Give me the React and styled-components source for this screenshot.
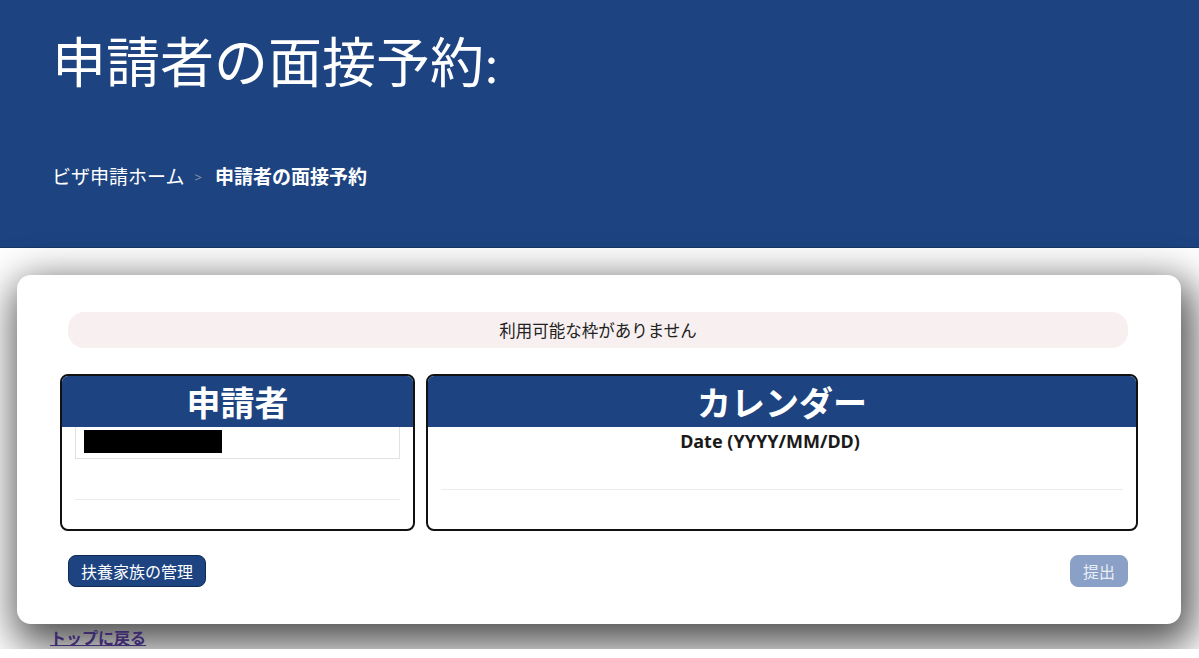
import styled, { createGlobalStyle } from 'styled-components';

const GlobalStyle = createGlobalStyle`
  html, body {
    margin: 0;
    padding: 0;
    background: #ffffff;
    font-family: "Noto Sans", "Noto Sans CJK JP", sans-serif;
  }
`;

function App() {
  return (
    <>
      <GlobalStyle />
      <Header>
        <Title>申請者の面接予約:</Title>
        <Crumbs>
          <span>ビザ申請ホーム</span>
          <Sep>&gt;</Sep>
          <strong>申請者の面接予約</strong>
        </Crumbs>
      </Header>
      <Main>
        <Card>
          <Alert>利用可能な枠がありません</Alert>
          <Panels>
            <Panel>
              <PanelHead>申請者</PanelHead>
              <PanelBody>
                <NameBox>
                  <Redacted />
                </NameBox>
                <Rule $top={40} />
              </PanelBody>
            </Panel>
            <Panel>
              <PanelHead>カレンダー</PanelHead>
              <PanelBody>
                <DateLabel>Date (YYYY/MM/DD)</DateLabel>
                <Rule $top={34} />
              </PanelBody>
            </Panel>
          </Panels>
          <Actions>
            <Button>扶養家族の管理</Button>
            <Button disabled>提出</Button>
          </Actions>
        </Card>
        <BackLink href="#">トップに戻る</BackLink>
      </Main>
    </>
  );
}

export default App;

const Header = styled.header`
  height: 248px;
  background: #1d4481;
  border-bottom: 1px solid #173766;
  padding: 28px 52px 0;
  box-sizing: border-box;
  color: #fff;
`;

const Title = styled.h1`
  margin: 0;
  font-family: "Liberation Serif", "Noto Sans CJK JP", serif;
  font-weight: normal;
  font-size: 54px;
  line-height: 74px;
`;

const Crumbs = styled.div`
  margin-top: 62px;
  font-size: 19px;
  line-height: 26px;
  display: flex;
  align-items: center;
  strong {
    font-weight: bold;
  }
`;

const Sep = styled.span`
  color: #8c96a8;
  font-size: 13px;
  margin: 0 13px 0 10px;
`;

const Main = styled.main`
  padding: 27px 18px 0 17px;
`;

const Card = styled.section`
  background: #fff;
  border-radius: 14px;
  box-shadow: 5px 14px 40px 8px rgba(0, 0, 0, 0.68);
  padding: 37px 43px 37px;
`;

const Alert = styled.div`
  margin: 0 10px 0 8px;
  height: 36px;
  border-radius: 16px;
  background: #f8f0f0;
  color: #222;
  font-size: 16.5px;
  display: flex;
  align-items: center;
  justify-content: center;
`;

const Panels = styled.div`
  margin-top: 26px;
  display: grid;
  grid-template-columns: 355px 1fr;
  gap: 11px;
`;

const Panel = styled.div`
  border: 2px solid #111;
  border-radius: 8px;
  overflow: hidden;
  height: 157px;
  box-sizing: border-box;
  display: flex;
  flex-direction: column;
`;

const PanelHead = styled.div`
  background: #1d4481;
  color: #fff;
  font-weight: bold;
  font-size: 34px;
  height: 51px;
  display: flex;
  align-items: center;
  justify-content: center;
`;

const PanelBody = styled.div`
  padding: 0 13px;
`;

const NameBox = styled.div`
  height: 32px;
  border: 1px solid #e2e2e2;
  border-top: none;
  box-sizing: border-box;
  padding: 3px 8px;
`;

const Redacted = styled.div`
  width: 138px;
  height: 23px;
  background: #000;
`;

const Rule = styled.div`
  margin-top: ${(p) => p.$top}px;
  height: 1px;
  background: #ececec;
`;

const DateLabel = styled.div`
  text-align: center;
  padding-right: 24px;
  font-weight: bold;
  font-size: 18px;
  line-height: 28px;
  color: #1a1a1a;
`;

const Actions = styled.div`
  margin: 24px 10px 0 8px;
  display: flex;
  justify-content: space-between;
`;

const Button = styled.button`
  height: 32px;
  padding: 0 12px;
  border-radius: 8px;
  border: 1px solid ${(p) => (p.disabled ? '#8aa0c6' : '#0f2a55')};
  background: ${(p) => (p.disabled ? '#8aa0c6' : '#1d4481')};
  color: ${(p) => (p.disabled ? '#e8edf6' : '#fff')};
  font-family: "Noto Sans", "Noto Sans CJK JP", sans-serif;
  font-size: 16px;
`;

const BackLink = styled.a`
  display: inline-block;
  margin: 3px 0 0 33px;
  color: #3b2a6e;
  font-weight: bold;
  font-size: 16px;
  line-height: 22px;
`;
